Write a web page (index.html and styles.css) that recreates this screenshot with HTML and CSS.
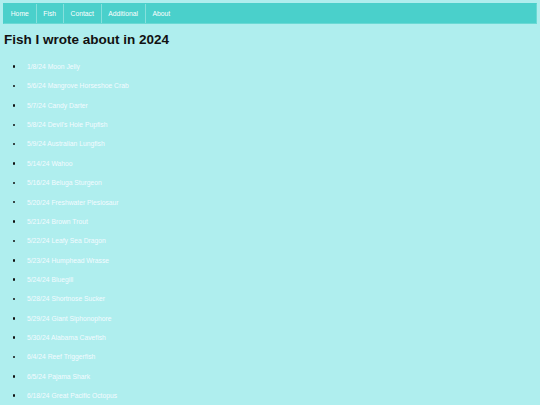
FILE: index.html
```html
<!DOCTYPE html>
<html lang="en">
<head>
<meta charset="utf-8">
<title>Fish I wrote about in 2024</title>
<link rel="stylesheet" href="styles.css">
</head>
<body>
<nav class="nav">
  <a class="nav-item" href="#">Home</a>
  <a class="nav-item" href="#">Fish</a>
  <a class="nav-item" href="#">Contact</a>
  <a class="nav-item" href="#">Additional</a>
  <a class="nav-item nav-last" href="#">About</a>
</nav>
<h1 class="title">Fish I wrote about in 2024</h1>
<ul class="fish-list">
  <li>1/8/24 Moon Jelly</li>
  <li>5/6/24 Mangrove Horseshoe Crab</li>
  <li>5/7/24 Candy Darter</li>
  <li>5/8/24 Devil's Hole Pupfish</li>
  <li>5/9/24 Australian Lungfish</li>
  <li>5/14/24 Wahoo</li>
  <li>5/16/24 Beluga Sturgeon</li>
  <li>5/20/24 Freshwater Plesiosaur</li>
  <li>5/21/24 Brown Trout</li>
  <li>5/22/24 Leafy Sea Dragon</li>
  <li>5/23/24 Humphead Wrasse</li>
  <li>5/24/24 Bluegill</li>
  <li>5/28/24 Shortnose Sucker</li>
  <li>5/29/24 Giant Siphonophore</li>
  <li>5/30/24 Alabama Cavefish</li>
  <li>6/4/24 Reef Triggerfish</li>
  <li>6/5/24 Pajama Shark</li>
  <li>6/18/24 Great Pacific Octopus</li>
</ul>
</body>
</html>
```
FILE: styles.css
```css
html, body {
  background: #afeeee;
}
body {
  margin: 3px;
  font-family: "Liberation Sans", Arial, sans-serif;
}
.nav {
  display: flex;
  height: 18.5px;
  background: #4ad0cb;
  border: 1px solid #6ad9d4;
  border-top-color: #4ad0cb;
  border-left-color: #4ad0cb;
}
.nav-item {
  display: flex;
  align-items: center;
  padding: 0 6.75px;
  font-size: 6.75px;
  color: #ffffff;
  text-decoration: none;
  border-right: 1px solid #86e0dc;
}
.nav-last {
  border-right: none;
}
.title {
  margin: 8.5px 0 0 1px;
  font-size: 13.5px;
  line-height: 15.5px;
  font-weight: bold;
  color: #111111;
}
.fish-list {
  margin: 9.6px 0 0 0;
  padding-left: 24px;
  list-style: none;
}
.fish-list li {
  display: flex;
  font-size: 6.75px;
  line-height: 19.35px;
  color: #f4fbff;
}
.fish-list li::before {
  content: "";
  align-self: center;
  flex: none;
  width: 2.6px;
  height: 2.6px;
  margin-left: -14.3px;
  margin-right: 11.7px;
  border-radius: 50%;
  background: #111111;
}
```
